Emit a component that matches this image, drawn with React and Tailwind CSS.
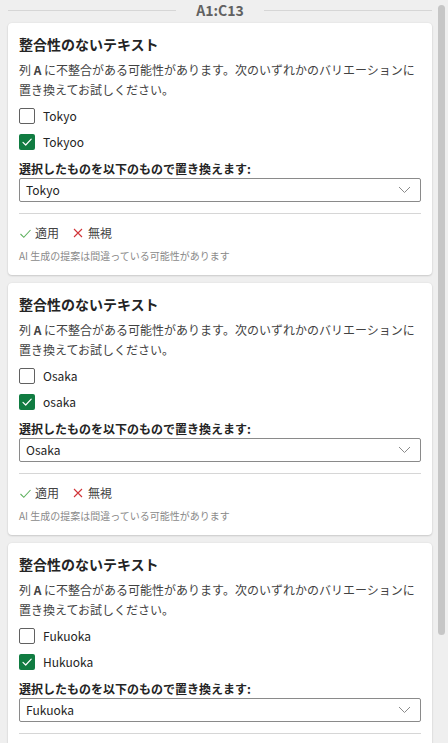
import React from 'react'

const FONT = { fontFamily: '"Noto Sans CJK JP", "Noto Sans", sans-serif' }

const Checkbox = ({ checked }) => (
    checked ? (
        <span className="flex h-4 w-4 items-center justify-center rounded-[2px] bg-[#107c41]">
            <svg width="12" height="12" viewBox="0 0 12 12" fill="none">
                <path d="M2 6.3 L4.7 9 L10.2 3.2" stroke="white" strokeWidth="1.2" strokeLinecap="round" strokeLinejoin="round" />
            </svg>
        </span>
    ) : (
        <span className="h-4 w-4 rounded-[2px] border border-[#616161] bg-white" />
    )
)

const Card = ({ options, value }) => (
    <div className="h-[252px] overflow-hidden rounded-[4px] bg-white px-[11px] pt-[11px] shadow-[0_1px_2px_rgba(0,0,0,0.14),0_0_2px_rgba(0,0,0,0.08)]">
        <div className="h-5 text-[14px] font-bold leading-5 text-[#242424]">整合性のないテキスト</div>
        <p className="mt-[6px] text-[12px] leading-5 text-[#424242]">
            列 <span className="font-bold">A</span> に不整合がある可能性があります。次のいずれかのバリエーションに<br />置き換えてお試しください。
        </p>
        <div className="mt-[3px]">
            {options.map((o) => (
                <div key={o.label} className="flex h-[26px] items-center gap-2">
                    <Checkbox checked={o.checked} />
                    <span className="text-[12px] text-[#242424]">{o.label}</span>
                </div>
            ))}
        </div>
        <div className="mt-[5px] text-[12px] font-bold leading-[18px] text-[#242424]">選択したものを以下のもので置き換えます:</div>
        <div className="flex h-6 items-center justify-between rounded-[2px] border border-[#8a8a8a] pl-[6px] pr-[9px]">
            <span className="text-[12px] text-[#242424]">{value}</span>
            <svg width="13" height="8" viewBox="0 0 13 8" fill="none">
                <path d="M1 1 L6.5 6.5 L12 1" stroke="#8a8a8a" strokeWidth="1" />
            </svg>
        </div>
        <div className="mt-[11px] h-px bg-[#d6d6d6]" />
        <div className="mt-[9px] flex h-5 items-center text-[12px] text-[#424242]">
            <svg width="13" height="13" viewBox="0 0 13 13" fill="none" className="mr-[3px]">
                <path d="M1.5 7 L4.8 10.3 L11.5 3" stroke="#5fb15f" strokeWidth="1.1" />
            </svg>
            <span>適用</span>
            <svg width="12" height="12" viewBox="0 0 12 12" fill="none" className="ml-[13px] mr-[4px]">
                <path d="M2 2 L10 10 M10 2 L2 10" stroke="#d13438" strokeWidth="1.1" />
            </svg>
            <span>無視</span>
        </div>
        <div className="mt-[5px] text-[10px] leading-4 text-[#8a8a8a]">AI 生成の提案は間違っている可能性があります</div>
    </div>
)

const cards = [
    { value: 'Tokyo', options: [{ label: 'Tokyo', checked: false }, { label: 'Tokyoo', checked: true }] },
    { value: 'Osaka', options: [{ label: 'Osaka', checked: false }, { label: 'osaka', checked: true }] },
    { value: 'Fukuoka', options: [{ label: 'Fukuoka', checked: false }, { label: 'Hukuoka', checked: true }] },
]

export default function App() {
    return (
        <div className="flex h-[743px] w-[448px] overflow-hidden bg-[#efefef]" style={FONT}>
            <div className="w-[432px] shrink-0 pl-2">
                <div className="flex h-5 items-center">
                    <div className="h-px flex-1 bg-[#d6d6d6]" />
                    <span className="px-5 text-[14px] font-bold text-[#616161]">A1:C13</span>
                    <div className="h-px flex-1 bg-[#d6d6d6]" />
                </div>
                <div className="mt-[3px] flex flex-col gap-2">
                    {cards.map((c) => (
                        <Card key={c.value} {...c} />
                    ))}
                </div>
            </div>
            <div className="flex-1 pl-[6px] pt-[5px]">
                <div className="h-[630px] w-[7px] rounded-full bg-[#c6c6c6]" />
            </div>
        </div>
    )
}
